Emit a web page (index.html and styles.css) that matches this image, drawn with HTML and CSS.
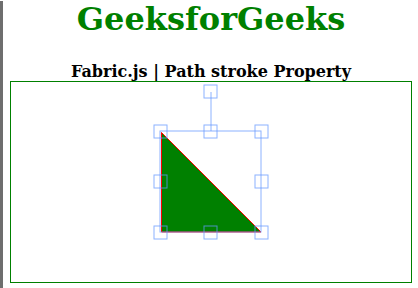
FILE: index.html
```html
<!DOCTYPE html>
<html>
<head>
<meta charset="utf-8">
<link rel="stylesheet" href="styles.css">
</head>
<body>
<div class="page">
  <h1 class="title">GeeksforGeeks</h1>
  <h2 class="subtitle">Fabric.js | Path stroke Property</h2>
  <div class="canvas">
    <svg class="scene" width="400" height="200" viewBox="0 0 400 200">
      <path d="M150.5 50.5 L150.5 150 L250 150 Z" fill="#008000" stroke="#ff0000" stroke-width="1"/>
      <g fill="none" stroke="rgba(102,153,255,0.75)" stroke-width="1">
        <rect x="149" y="49" width="101" height="101"/>
        <line x1="200" y1="49" x2="200" y2="10"/>
        <rect x="193" y="3" width="13" height="13"/>
        <rect x="143" y="43" width="13" height="13"/>
        <rect x="193" y="43" width="13" height="13"/>
        <rect x="244" y="43" width="13" height="13"/>
        <rect x="143" y="93" width="13" height="13"/>
        <rect x="244" y="93" width="13" height="13"/>
        <rect x="143" y="144" width="13" height="13"/>
        <rect x="193" y="144" width="13" height="13"/>
        <rect x="244" y="144" width="13" height="13"/>
      </g>
    </svg>
  </div>
</div>
</body>
</html>
```
FILE: styles.css
```css
html, body {
  margin: 0;
  padding: 0;
  background: #ffffff;
}
body {
  font-family: "DejaVu Serif", serif;
}
.page {
  border-left: 3px solid #6e6e6e;
  min-height: 288px;
  box-sizing: border-box;
  padding: 0 6px 0 7px;
  text-align: center;
}
.title {
  margin: 1px 0 0;
  font-size: 32px;
  line-height: 37px;
  font-weight: bold;
  color: #008000;
}
.subtitle {
  margin: 24px 0 0;
  font-size: 16px;
  line-height: 19px;
  font-weight: bold;
  color: #000000;
}
.canvas {
  width: 400px;
  height: 200px;
  border: 1px solid #008000;
}
.scene {
  display: block;
}
```
